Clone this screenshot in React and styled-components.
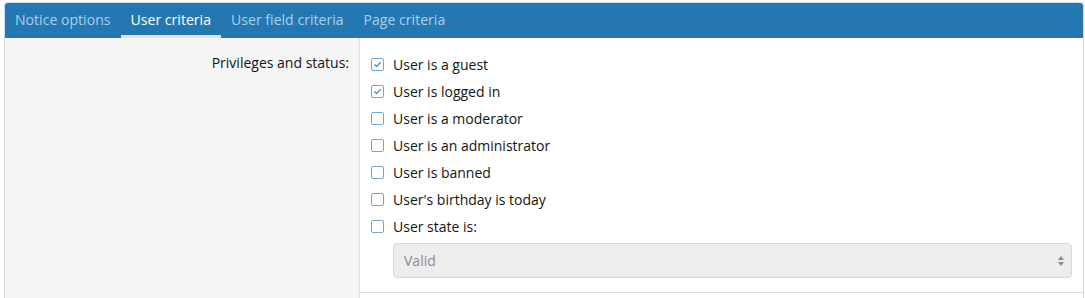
import React, { useState } from 'react';
import styled, { createGlobalStyle } from 'styled-components';

const GlobalStyle = createGlobalStyle`
  body {
    margin: 0;
    padding: 2px 1px 0 4px;
    background: #fff;
    font-family: 'Open Sans', 'Noto Sans', sans-serif;
    font-size: 14px;
    color: #141414;
  }
`;

const Block = styled.div`
  border: 1px solid #d8d8d8;
  border-bottom: none;
  border-radius: 4px 4px 0 0;
  overflow: hidden;
`;

const TabBar = styled.div`
  display: flex;
  height: 35px;
  background: #2577b1;
`;

const Tab = styled.button`
  font: inherit;
  font-size: 14.1px;
  background: none;
  border: none;
  cursor: pointer;
  padding: 1px 10px 0;
  height: 35px;
  color: ${(p) => (p.active ? '#fff' : '#a8d0ef')};
  border-bottom: 3px solid ${(p) => (p.active ? '#d0e4f4' : 'transparent')};
`;

const Row = styled.div`
  display: flex;
`;

const LabelCol = styled.div`
  width: 344px;
  flex-shrink: 0;
  background: #f5f5f5;
  border-right: 1px solid #dfdfdf;
  padding: 15px 10px 0 0;
  text-align: right;
  min-height: 256px;
`;

const InputCol = styled.div`
  flex: 1;
  padding: 13px 11px 14px 11px;
  border-bottom: 1px solid #dfdfdf;
  align-self: flex-start;
`;

const CheckList = styled.ul`
  list-style: none;
  margin: 0;
  padding: 0;
`;

const CheckRow = styled.li`
  display: flex;
  align-items: center;
  height: 27px;
  gap: 9px;
`;

const Box = styled.span`
  width: 11px;
  height: 11px;
  border: 1px solid #6fa6d3;
  border-radius: 2px;
  background: #fff;
  display: flex;
  align-items: center;
  justify-content: center;
  cursor: pointer;
`;

const Select = styled.div`
  margin: 3px 0 0 22px;
  height: 33px;
  border: 1px solid #d8d8d8;
  border-radius: 4px;
  background: #ededed;
  color: #8c8c8c;
  display: flex;
  align-items: center;
  justify-content: space-between;
  padding: 0 6px 0 10px;
`;

const items = [
  ['User is a guest', true],
  ['User is logged in', true],
  ['User is a moderator', false],
  ['User is an administrator', false],
  ['User is banned', false],
  ["User's birthday is today", false],
  ['User state is:', false],
];

const Check = ({ on }) => (
  <Box>
    {on && (
      <svg width="9" height="9" viewBox="0 0 9 9">
        <path d="M1.5 4.6 L3.6 6.6 L7.6 2.2" fill="none" stroke="#4a8cc4" strokeWidth="1.4" />
      </svg>
    )}
  </Box>
);

const tabs = ['Notice options', 'User criteria', 'User field criteria', 'Page criteria'];

export default function App() {
  const [active, setActive] = useState(1);
  return (
    <>
      <GlobalStyle />
      <Block>
        <TabBar>
          {tabs.map((t, i) => (
            <Tab key={t} active={i === active} onClick={() => setActive(i)}>
              {t}
            </Tab>
          ))}
        </TabBar>
        <Row>
          <LabelCol>Privileges and status:</LabelCol>
          <InputCol>
            <CheckList>
              {items.map(([label, on]) => (
                <CheckRow key={label}>
                  <Check on={on} />
                  {label}
                </CheckRow>
              ))}
            </CheckList>
            <Select>
              Valid
              <svg width="8" height="12" viewBox="0 0 8 12">
                <path d="M4 1 L7 5 H1 Z M4 11 L7 7 H1 Z" fill="#8c8c8c" />
              </svg>
            </Select>
          </InputCol>
        </Row>
      </Block>
    </>
  );
}
